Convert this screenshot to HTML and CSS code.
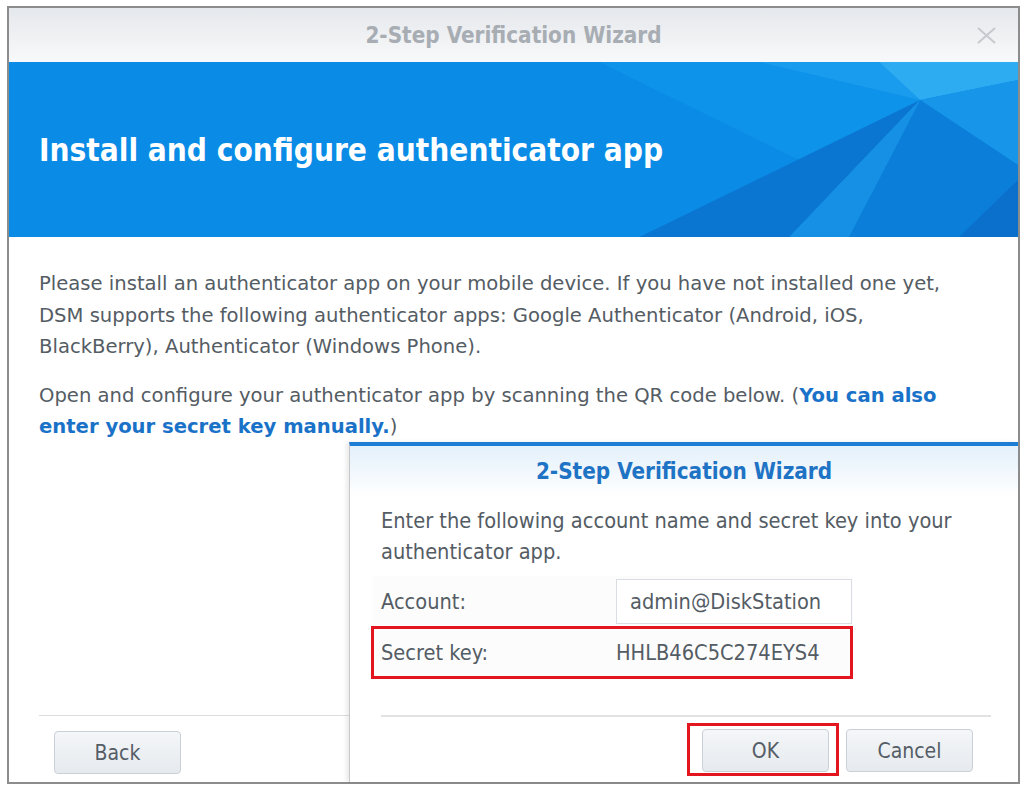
FILE: index.html
```html
<!DOCTYPE html>
<html lang="en">
  <head>
    <meta charset="UTF-8" />
    <meta name="viewport" content="width=device-width, initial-scale=1.0" />
    <title>2-Step Verification Wizard</title>
    <link rel="stylesheet" href="styles.css">
  </head>
  <body>
    <div class="window">
      <div class="titleBar">
        <span class="titleText">2-Step Verification Wizard</span>
        <svg class="close" width="19" height="17" viewBox="0 0 19 17">
          <path d="M1 1 L18 16 M18 1 L1 16" stroke="#c6c9cd" stroke-width="2" fill="none" />
        </svg>
      </div>

      <div class="banner">
        <!-- faceted background, drawn in page coordinates -->
        <svg class="facets" viewBox="9 62 1010 175" preserveAspectRatio="none">
          <polygon points="600,62 760,62 921,100 800,160" fill="#0e93ea" />
          <polygon points="760,62 880,62 921,100" fill="#1a9cee" />
          <polygon points="880,62 1019,62 1019,80 921,100" fill="#2eacf2" />
          <polygon points="800,160 921,100 880,200 780,190" fill="#18a0ee" />
          <polygon points="921,100 1019,80 1019,165" fill="#1795e8" />
          <polygon points="921,100 640,237 790,237" fill="#0a76d2" />
          <polygon points="921,100 790,237 850,237" fill="#1590e4" />
          <polygon points="921,100 850,237 1019,237 1019,165" fill="#0a7ed8" />
          <polygon points="960,237 1019,180 1019,237" fill="#0a70cc" />
        </svg>
        <h1>Install and configure authenticator app</h1>
      </div>

      <div class="content">
        <p>Please install an authenticator app on your mobile device. If you have not installed one yet, DSM supports the following authenticator apps: Google Authenticator (Android, iOS, BlackBerry), Authenticator (Windows Phone).</p>
        <p>Open and configure your authenticator app by scanning the QR code below. (<a href="#">You can also enter your secret key manually.</a>)</p>
      </div>

      <div class="footer">
        <button class="btn">Back</button>
      </div>

      <!-- secret key popup opened from the link above -->
      <div class="dialog">
        <div class="dialogHead">2-Step Verification Wizard</div>
        <div class="dialogBody">
          <p>Enter the following account name and secret key into your authenticator app.</p>
          <div class="row">
            <span class="label">Account:</span>
            <span class="field">admin@DiskStation</span>
          </div>
          <div class="row marked">
            <span class="label">Secret key:</span>
            <span class="value">HHLB46C5C274EYS4</span>
          </div>
        </div>
        <div class="dialogFoot">
          <span class="okMark"><button class="btn">OK</button></span>
          <button class="btn cancel">Cancel</button>
        </div>
      </div>
    </div>
  </body>
</html>
```

FILE: styles.css
```css
* {
  margin: 0;
  padding: 0;
  box-sizing: border-box;
}

body {
  background: #fff;
  font-family: "DejaVu Sans", Verdana, sans-serif;
  color: #545c64;
}

.window {
  position: relative;
  width: 1013px;
  height: 778px;
  margin: 6px 0 0 7px;
  border: 2px solid #8c8c8c;
  display: flex;
  flex-direction: column;
  background: #fff;
}

.titleBar {
  position: relative;
  height: 54px;
  display: flex;
  align-items: center;
  justify-content: center;
  background: linear-gradient(#e5e8ec, #f8f9fa);
}

.titleText {
  font-family: "DejaVu Sans Condensed", "DejaVu Sans", sans-serif;
  font-weight: bold;
  font-size: 22.3px;
  color: #a7adb3;
}

.close {
  position: absolute;
  right: 22px;
  top: 19px;
}

.banner {
  position: relative;
  height: 175px;
  background: #0a8ce6;
  display: flex;
  align-items: center;
  overflow: hidden;
}

.facets {
  position: absolute;
  left: 0;
  top: 0;
  width: 100%;
  height: 100%;
}

.banner h1 {
  position: relative;
  margin: 0 0 0 30px;
  font-family: "DejaVu Sans Condensed", "DejaVu Sans", sans-serif;
  font-weight: bold;
  font-size: 31.3px;
  color: #fff;
}

.content {
  flex: 1;
  padding: 31px 40px 0 30px;
  font-size: 19.6px;
  line-height: 31.5px;
}

.content p {
  margin-bottom: 17px;
}

.content a {
  color: #1a72c8;
  font-weight: bold;
  text-decoration: none;
}

.footer {
  margin: 0 30px;
  height: 67px;
  border-top: 1px solid #dcdcdc;
  padding: 15px 0 0 15px;
}

.btn {
  width: 127px;
  height: 43px;
  border: 1px solid #c9d0d7;
  border-radius: 4px;
  background: linear-gradient(#f4f6f8, #e6eaee);
  font-family: "DejaVu Sans Condensed", "DejaVu Sans", sans-serif;
  font-size: 21px;
  color: #555d66;
}

/* popup */
.dialog {
  position: absolute;
  left: 340px;
  top: 434px;
  right: 0;
  bottom: 0;
  border-top: 4px solid #1d7dd4;
  border-left: 1px solid #c8c8c8;
  box-shadow: -3px 0 4px rgba(0, 0, 0, 0.08);
  background: #fff;
  display: flex;
  flex-direction: column;
  font-family: "DejaVu Sans Condensed", "DejaVu Sans", sans-serif;
}

.dialogHead {
  height: 50px;
  display: flex;
  align-items: center;
  justify-content: center;
  background: linear-gradient(#e3f0fb, #fff);
  color: #1f73c4;
  font-weight: bold;
  font-size: 22.3px;
}

.dialogBody {
  flex: 1;
  padding: 9px 0 0 31px;
  font-size: 21.6px;
  color: #545c64;
}

.dialogBody p {
  line-height: 31px;
  width: 620px;
  margin-bottom: 9px;
}

.row {
  width: 480px;
  height: 50px;
  display: flex;
  align-items: center;
  margin-left: -8px;
  padding-left: 8px;
  background: #fcfcfc;
}

.label {
  width: 235px;
  flex-shrink: 0;
}

.field {
  width: 236px;
  height: 45px;
  flex-shrink: 0;
  border: 1px solid #d9dde1;
  padding-left: 13px;
  display: flex;
  align-items: center;
  background: #fff;
}

.marked {
  width: 482px;
  height: 53px;
  margin-left: -10px;
  padding-left: 7px;
  border: 3px solid #e3151f;
}

.dialogFoot {
  margin: 0 27px 0 31px;
  height: 67px;
  border-top: 2px solid #e2e2e2;
  display: flex;
  justify-content: flex-end;
  align-items: flex-start;
  gap: 16px;
  padding: 6px 18px 0 0;
}

.okMark {
  border: 3px solid #e3151f;
  padding: 3px 7px 1px 12px;
  margin-right: -9px;
}

.cancel {
  margin-top: 6px;
}
```
